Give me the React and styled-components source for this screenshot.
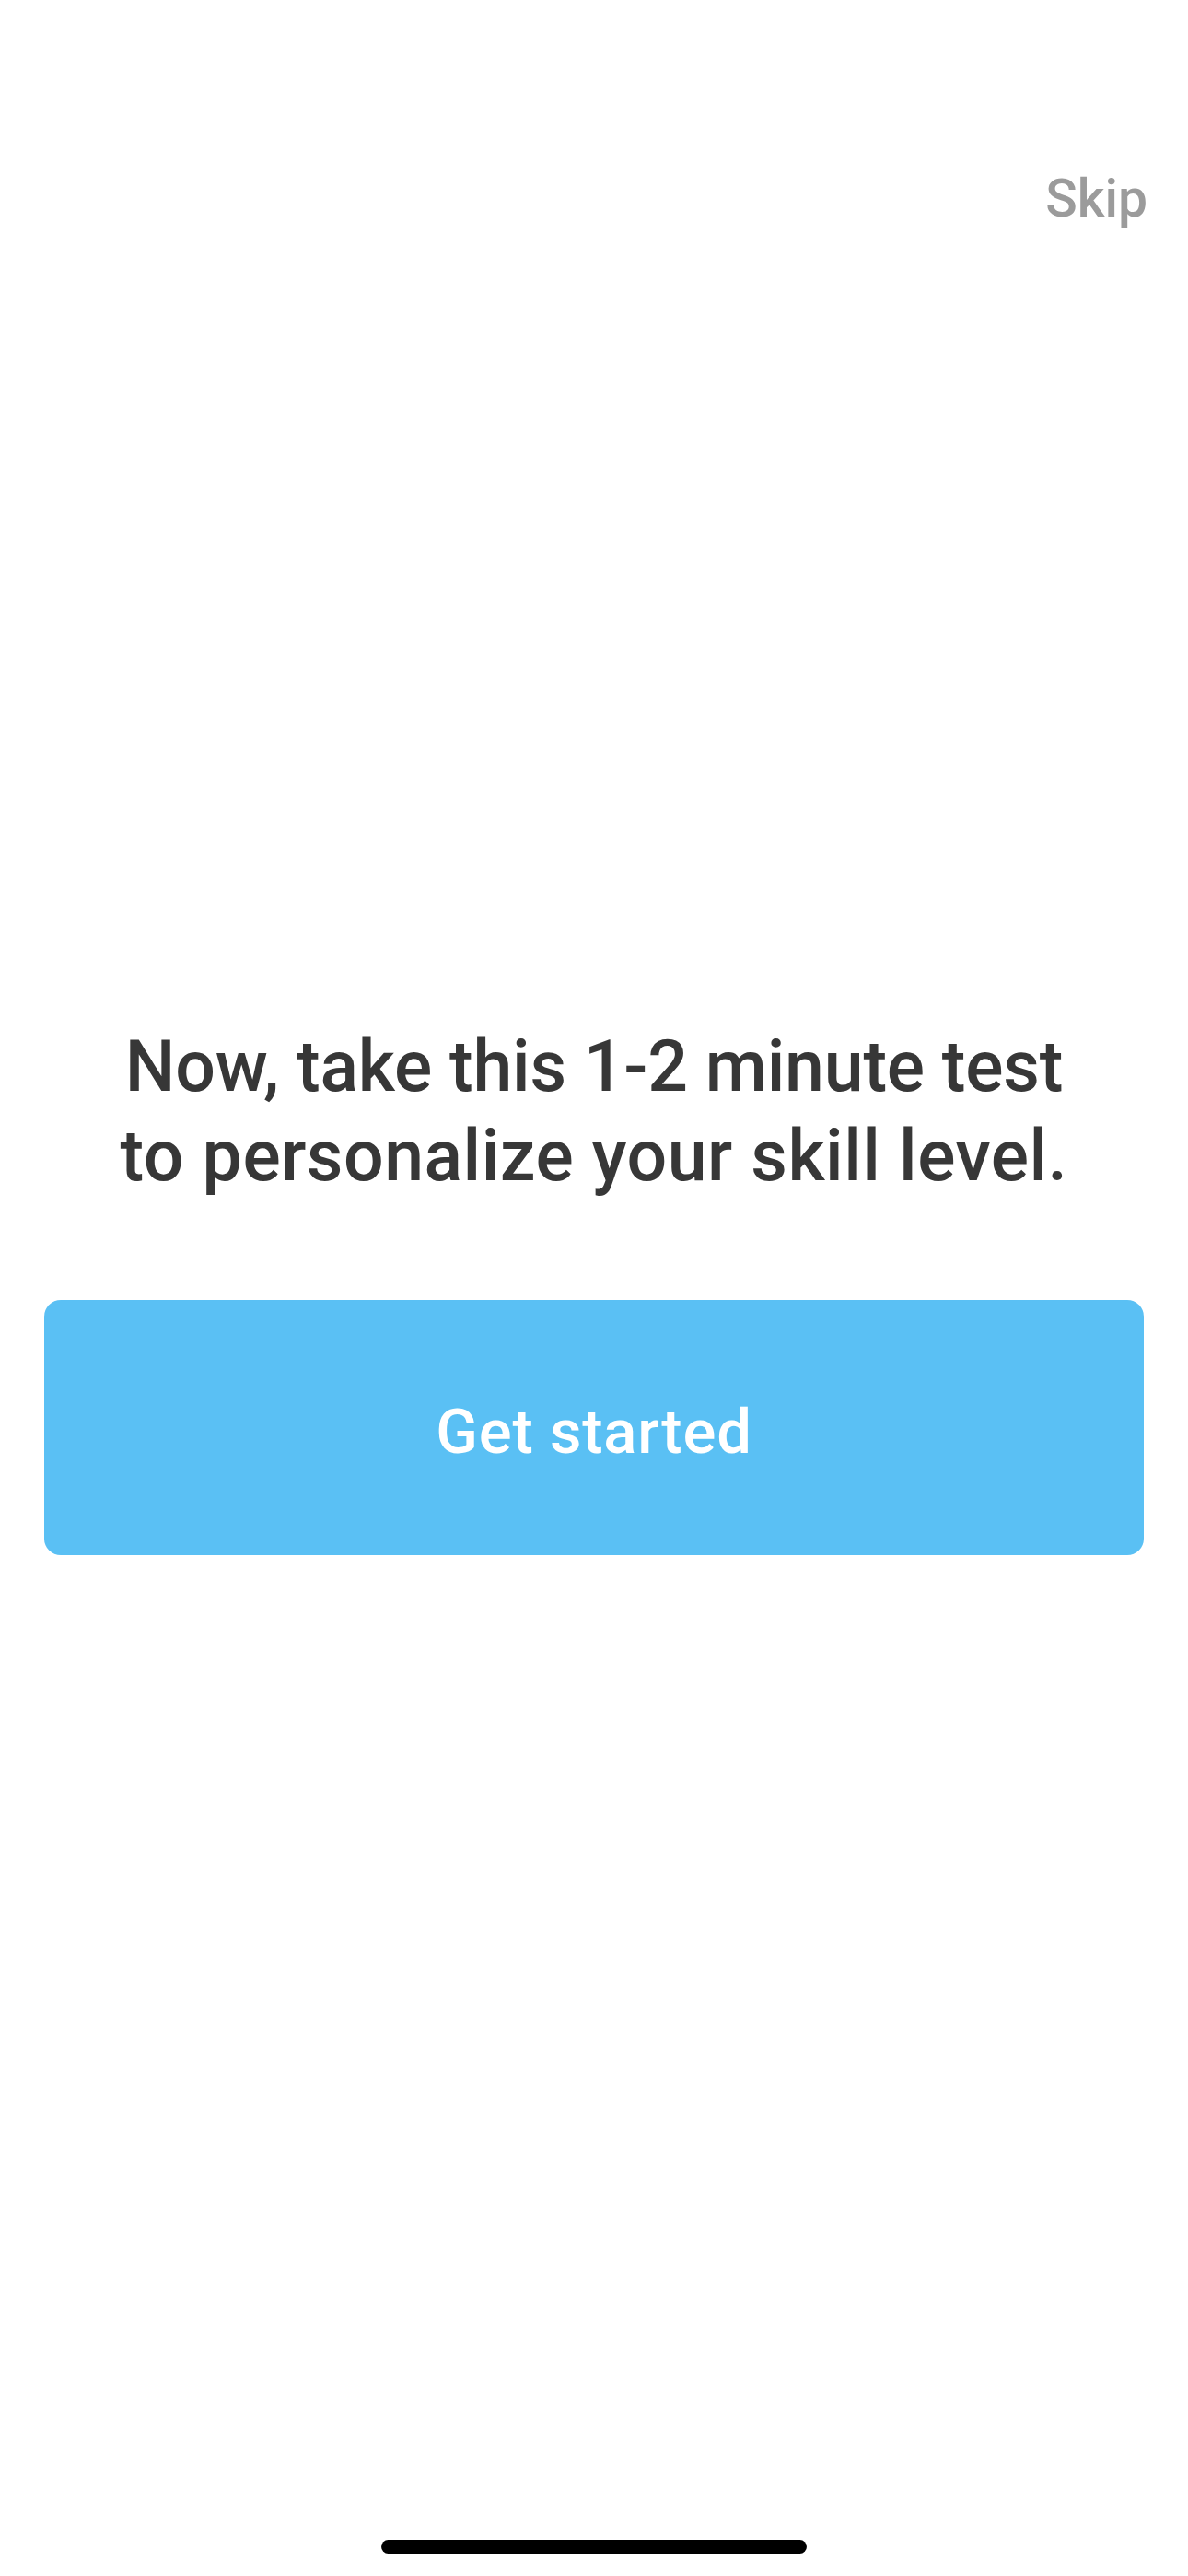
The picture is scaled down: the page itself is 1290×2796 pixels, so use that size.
import React from 'react';
import styled, { createGlobalStyle } from 'styled-components';

const GlobalStyle = createGlobalStyle`
  html, body {
    margin: 0;
    padding: 0;
    background: #ffffff;
  }
  body {
    font-family: Roboto, "Noto Sans", "DejaVu Sans", sans-serif;
  }
`;

const Screen = styled.div`
  min-height: 100vh;
  display: flex;
  flex-direction: column;
  background: #ffffff;
  box-sizing: border-box;
`;

const TopBar = styled.div`
  display: flex;
  justify-content: flex-end;
  padding: 187px 44px 0;
`;

const SkipButton = styled.button`
  border: none;
  background: none;
  padding: 0;
  font-family: inherit;
  font-size: 57px;
  line-height: 1;
  font-weight: 500;
  color: #9b9b9b;
  cursor: pointer;
`;

const Content = styled.div`
  display: flex;
  flex-direction: column;
  align-items: center;
  padding: 0 48px;
  margin-top: 866px;
`;

const Headline = styled.h1`
  margin: 0;
  display: flex;
  flex-direction: column;
  align-items: center;
  font-size: 77px;
  line-height: 97px;
  font-weight: 500;
  color: #373737;
  text-align: center;
`;

const HeadlineLine = styled.span`
  letter-spacing: ${props => props.$tracking || '0px'};
  white-space: nowrap;
`;

const PrimaryButton = styled.button`
  margin-top: 107px;
  width: 100%;
  height: 277px;
  padding: 8px 0 0;
  border: none;
  border-radius: 18px;
  background: #5ac0f4;
  color: #ffffff;
  font-family: inherit;
  font-size: 67px;
  font-weight: 500;
  letter-spacing: 0.8px;
  display: flex;
  align-items: center;
  justify-content: center;
  cursor: pointer;
`;

const HomeIndicator = styled.div`
  margin: auto auto 24px;
  width: 462px;
  height: 15px;
  border-radius: 8px;
  background: #000000;
`;

export default function App() {
  return (
    <>
      <GlobalStyle />
      <Screen>
        <TopBar>
          <SkipButton>Skip</SkipButton>
        </TopBar>
        <Content>
          <Headline>
            <HeadlineLine $tracking="-0.2px">Now, take this 1-2 minute test</HeadlineLine>
            <HeadlineLine $tracking="0.5px">to personalize your skill level.</HeadlineLine>
          </Headline>
          <PrimaryButton>Get started</PrimaryButton>
        </Content>
        <HomeIndicator />
      </Screen>
    </>
  );
}
